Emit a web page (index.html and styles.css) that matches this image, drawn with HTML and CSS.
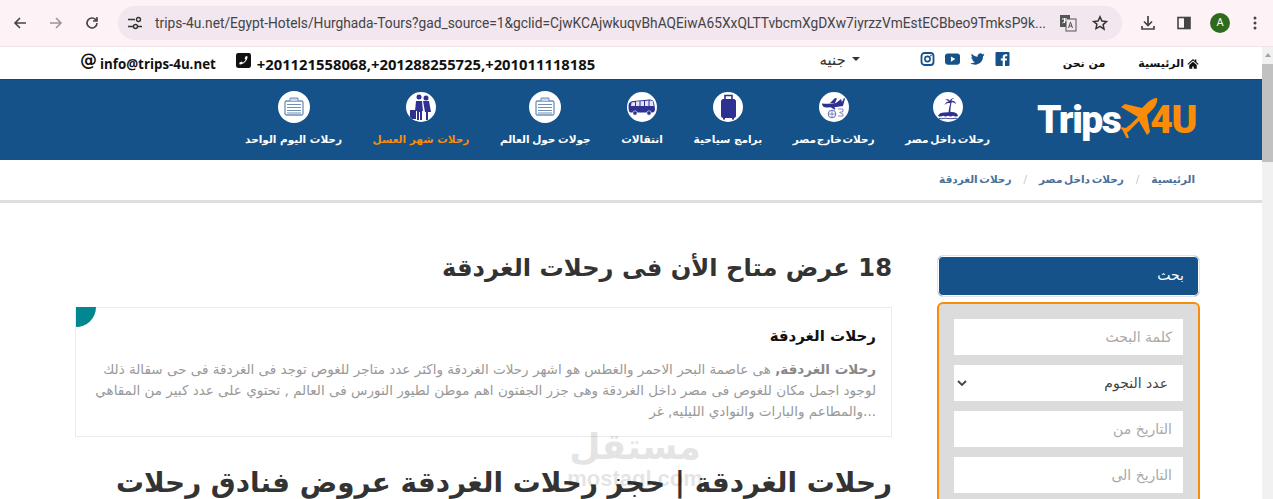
FILE: index.html
```html
<!DOCTYPE html>
<html lang="ar">
<head>
<meta charset="utf-8">
<title>Trips 4U</title>
<link rel="stylesheet" href="styles.css">
</head>
<body>
<div class="chrome">
  <svg class="tb back" viewBox="0 0 16 16"><path d="M14 8H3M8 3 3 8l5 5" fill="none" stroke="#444" stroke-width="1.6"/></svg>
  <svg class="tb fwd" viewBox="0 0 16 16"><path d="M2 8h11M8 3l5 5-5 5" fill="none" stroke="#9a979b" stroke-width="1.6"/></svg>
  <svg class="tb reload" viewBox="0 0 16 16"><path d="M13 8a5 5 0 1 1-1.5-3.6L13 6M13 2v4H9" fill="none" stroke="#444" stroke-width="1.6"/></svg>
  <div class="omni">
    <svg class="tune" viewBox="0 0 16 16"><path d="M1 4.500h7M11 11.500h4M1 11.500h5" stroke="#333" stroke-width="1.500"/><circle cx="11.500" cy="4.500" r="2" fill="none" stroke="#333" stroke-width="1.400"/><circle cx="8.500" cy="11.500" r="2" fill="none" stroke="#333" stroke-width="1.400"/></svg>
    <span class="url">trips-4u.net/Egypt-Hotels/Hurghada-Tours?gad_source=1&amp;gclid=CjwKCAjwkuqvBhAQEiwA65XxQLTTvbcmXgDXw7iyrzzVmEstECBbeo9TmksP9k...</span>
    <svg class="translate" viewBox="0 0 18 18"><rect x="1" y="1" width="10" height="12" fill="#555"/><rect x="7" y="5" width="10" height="12" fill="#f2e6ef" stroke="#555"/><path d="M3 5h5M5.500 4v5M3.500 9l4-3" stroke="#fff" stroke-width="1" fill="none"/><path d="M9.500 14l2-6 2 6M10 12h3" stroke="#555" stroke-width="1" fill="none"/></svg>
    <svg class="star" viewBox="0 0 16 16"><path d="m8 1.800 1.900 4.200 4.600.5-3.400 3.100.9 4.500L8 11.300 4 13.600l.9-4.500L1.500 6.500l4.600-.5z" fill="none" stroke="#333" stroke-width="1.500"/></svg>
  </div>
  <svg class="tb dl" viewBox="0 0 16 16"><path d="M8 1v9M4 6.500 8 10.500l4-4M2 11v3h12v-3" fill="none" stroke="#444" stroke-width="1.700"/></svg>
  <svg class="tb side" viewBox="0 0 16 16"><rect x="2" y="2.500" width="12" height="11" fill="none" stroke="#444" stroke-width="1.600"/><rect x="8" y="2.500" width="6" height="11" fill="#444"/></svg>
  <span class="avatar">A</span>
  <svg class="tb menu" viewBox="0 0 16 16"><circle cx="8" cy="3" r="1.500" fill="#444"/><circle cx="8" cy="8" r="1.500" fill="#444"/><circle cx="8" cy="13" r="1.500" fill="#444"/></svg>
</div>
<div class="viewport">
  <div class="page">
    <div class="topbar">
      <a class="top-link home"><svg class="home-ico" viewBox="0 0 16 14"><path d="M8 1 0.500 7.500l1 1L8 3l6.500 5.500 1-1L12.500 5V1.500h-2v1.800zM3 9v5h4v-3h2v3h4V9L8 4.500z" fill="#111"/></svg>الرئيسية</a>
      <a class="top-link about">من نحن</a>
      <div class="social">
        <svg viewBox="0 0 14 14"><path d="M1 0h12a1 1 0 0 1 1 1v12a1 1 0 0 1-1 1H9.500V8.600h1.800l.3-2.100H9.500V5.200c0-.6.2-1 1-1h1.200V2.300c-.6-.1-1.100-.1-1.700-.1-1.700 0-2.800 1-2.800 2.800v1.500H5.300v2.100h1.900V14H1a1 1 0 0 1-1-1V1a1 1 0 0 1 1-1z" fill="#155289"/></svg>
        <svg viewBox="0 0 16 14"><path d="M15.500 2.300c-.5.300-1.100.4-1.700.5.600-.4 1.100-1 1.300-1.700-.6.400-1.200.6-1.900.8A3 3 0 0 0 8.100 4.600C5.600 4.500 3.400 3.300 1.900 1.500 1.100 2.900 1.500 4.600 2.800 5.500c-.5 0-1-.2-1.400-.4 0 1.500 1 2.700 2.500 3-.5.100-.9.100-1.400 0 .4 1.200 1.500 2 2.900 2.100C3.600 11.200 1.900 11.700.3 11.500 4.400 14.100 9.300 13.200 12 10c1.300-1.600 1.900-3.500 1.900-5.900.6-.4 1.200-1 1.600-1.800z" fill="#155289"/></svg>
        <svg viewBox="0 0 16 14"><rect x="0" y="1" width="16" height="12" rx="3" fill="#155289"/><path d="M6.300 4.200v5.600L11 7z" fill="#fff"/></svg>
        <svg viewBox="0 0 14 14"><rect x="1" y="1" width="12" height="12" rx="3" fill="none" stroke="#155289" stroke-width="1.800"/><circle cx="7" cy="7" r="2.600" fill="none" stroke="#155289" stroke-width="1.600"/><circle cx="10.400" cy="3.600" r=".8" fill="#155289"/></svg>
      </div>
      <span class="currency">جنيه<i class="caret"></i></span>
      <div class="contact" dir="ltr">
        <span class="at">@</span><span class="mail">info@trips-4u.net</span>
        <svg class="phone" viewBox="0 0 14 14"><rect width="14" height="14" rx="2" fill="#111"/><path d="M10.800 3.300 9.200 2.800 8 5.200l1 .8c-.4 1.200-1.400 2.300-2.600 3l-.9-1L3 9l.4 1.700c3.500.3 7.400-3.500 7.400-7.400z" fill="#fff"/></svg>
        <span class="phones">+201121558068,+201288255725,+201011118185</span>
      </div>
    </div>

    <nav class="nav">
      <div class="logo" dir="ltr"><span class="logo-w">Trips</span><svg class="plane" viewBox="0 0 38 40"><path d="M37 0c1 4-2 9-6 13l-4 4 3 17-3 3-8-14-8 8c-1 2-3 3-4 3l2 6-2 1-4-8-3-4 6 1c1-1 2-2 4-3l8-8L1 9l4-3 17 4 5-5c3-3 7-5 10-5z" fill="#fa8c0a"/></svg><span class="logo-o">4U</span></div>
      <a class="nav-item"><span class="disc"><svg viewBox="0 0 30 30"><path d="M15.500 21c.3-4 1-7 1.800-9.500-2-1-4.300-.3-5.800 1.800.5-2.500 2.300-3.800 4.300-3.800-1-1.200-2.300-1.700-3.800-1.500 1.800-1.300 4-.8 5 .8.500-1.800 2.300-2.800 4.300-2.300-1.700.3-2.600 1.100-2.800 2.300 2-.3 4 .8 4.800 3.500-1.600-1.500-3.300-2.300-4.800-1.800-.8 3.500-1.200 7-1 10.500z" fill="#2e3192"/><path d="M5 24c1-2.500 3-3.500 6-3.500l8-.5c3 0 5.500 1 6 4-2 .8-3.500.6-5-.2-1.500 1-3.500 1-5 0-1.500 1-3.500 1-4.500 0-2 1-3.500 1-5.500.2z" fill="#2e3192"/><path d="M6 26.500c3 .8 5-.8 9 0s6-.8 9 0" fill="none" stroke="#2e3192" stroke-width=".9"/></svg></span>رحلات داخل مصر</a>
      <a class="nav-item tight"><span class="disc"><svg viewBox="0 0 30 30"><path d="M3 11.500c5 .5 10 .2 14-.5l5-4 1 3-1 2 3-6 1 .5-2 7.500-7 1-5 .2-4 .2c-3 .200-5-1-5-3.900z" fill="#2e3192"/><path d="M11 11l5-5 2 .5-2 4.500zM11 14.500l4 3 1.500-.3-1.500-3z" fill="#2e3192"/><circle cx="13" cy="22" r="3.800" fill="none" stroke="#5d6fb0" stroke-width="1"/><path d="M9.500 22h7M13 18.500v7" stroke="#5d6fb0" stroke-width=".8"/><path d="M19 17h5v2.500l-3.500 1 3.500 1.500v2h-5" fill="none" stroke="#7d8cc0"/></svg></span>رحلات خارج مصر</a>
      <a class="nav-item loose"><span class="disc"><svg viewBox="0 0 30 30"><rect x="8" y="7" width="15" height="19" rx="2.500" fill="#2e3192"/><path d="M12 7V3.500h7V7" fill="none" stroke="#2e3192" stroke-width="1.600"/><rect x="10" y="26" width="2" height="1.500" fill="#2e3192"/><rect x="19" y="26" width="2" height="1.500" fill="#2e3192"/></svg></span>برامج سياحية</a>
      <a class="nav-item"><span class="disc"><svg viewBox="0 0 30 30"><path d="M1.500 14c0-3 1.500-4.500 5-5l16-1.500c2.500 0 4 1 4.500 3l1 6.500c0 2-1 3.500-2.500 3.500H3.500C2.200 20.500 1.500 18 1.500 14z" fill="#2e3192"/><path d="M9 9.500l3.500-.3v4.800H9zM13.500 9.200l3.500-.3v5.100h-3.500zM18 8.900l3.500-.3v5.400H18zM22.500 8.600l3.500.3.600 5.100h-4.100zM4.500 10.500l3.500-.5v4H4z" fill="#e2e4f4"/><circle cx="8" cy="21" r="2.200" fill="#2e3192" stroke="#fff" stroke-width=".6"/><circle cx="22" cy="21" r="2.200" fill="#2e3192" stroke="#fff" stroke-width=".6"/></svg></span>انتقالات</a>
      <a class="nav-item tour"><span class="disc big"><svg viewBox="0 0 32 32"><rect x="7" y="10" width="18" height="14" rx="1.500" fill="#fff" stroke="#6d8fb8" stroke-width="1.300"/><path d="M12 10V7h8v3" fill="#cfd8e6" stroke="#6d8fb8"/><path d="M9 13.500h14M9 16.500h14M9 19.500h14M9 22h14" stroke="#6d8fb8" stroke-width="1.200"/></svg></span>جولات حول العالم</a>
      <a class="nav-item active loose"><span class="disc"><svg viewBox="0 0 30 30"><circle cx="13" cy="5" r="2.500" fill="#2e3192"/><circle cx="20" cy="6" r="2.500" fill="#2e3192"/><path d="M10 9h6l1 10h-1v9h-2v-8h-1v8h-2V19H9z" fill="#2e3192"/><path d="M17 9h6l2 11h-3v8h-2v-8h-1z" fill="#2e3192"/><rect x="4" y="18" width="6" height="9" fill="#2e3192"/></svg></span>رحلات شهر العسل</a>
      <a class="nav-item loose"><span class="disc big"><svg viewBox="0 0 32 32"><rect x="7" y="10" width="18" height="14" rx="1.500" fill="#fff" stroke="#6d8fb8" stroke-width="1.300"/><path d="M12 10V7h8v3" fill="#cfd8e6" stroke="#6d8fb8"/><path d="M9 13.500h14M9 16.500h14M9 19.500h14M9 22h14" stroke="#6d8fb8" stroke-width="1.200"/></svg></span>رحلات اليوم الواحد</a>
    </nav>

    <div class="crumbs">
      <a>الرئيسية</a><span class="sep">/</span><a>رحلات داخل مصر</a><span class="sep">/</span><a>رحلات الغردقة</a>
    </div>

    <main class="main">
      <aside class="side-col">
        <div class="search-head">بحث</div>
        <div class="search-box">
          <div class="field ph">كلمة البحث</div>
          <div class="field sel">عدد النجوم<svg viewBox="0 0 10 6"><path d="M1 1l4 4 4-4" fill="none" stroke="#444" stroke-width="1.800"/></svg></div>
          <div class="field ph">التاريخ من</div>
          <div class="field ph">التاريخ الى</div>
        </div>
      </aside>
      <section class="content">
        <h1 class="title">18 عرض متاح الأن فى رحلات الغردقة</h1>
        <article class="card">
          <span class="corner"></span>
          <h2 class="card-title">رحلات الغردقة</h2>
          <p class="card-text"><b>رحلات الغردقة,</b> هى عاصمة البحر الاحمر والغطس هو اشهر رحلات الغردقة واكثر عدد متاجر للغوص توجد فى الغردقة فى حى سقالة ذلك لوجود اجمل مكان للغوص فى مصر داخل الغردقة وهى جزر الجفتون اهم موطن لطيور النورس فى العالم , تحتوي على عدد كبير من المقاهي ...والمطاعم والبارات والنوادي الليليه, غر</p>
        </article>
        <h2 class="title2">رحلات الغردقة | حجز رحلات الغردقة عروض فنادق رحلات</h2>
      </section>
    </main>
    <div class="mark"><span class="mark-ar">مستقل</span><span class="mark-en">mostaql.com</span></div>
  </div>
  <div class="scrollbar"><span class="arrow"></span><span class="thumb"></span></div>
</div>
</body>
</html>
```
FILE: styles.css
```css
* { box-sizing: border-box; }
html, body { margin: 0; height: 499px; overflow: hidden; background: #fff; }
body { font-family: "DejaVu Sans", sans-serif; }
a { color: inherit; text-decoration: none; }

.chrome { height: 47px; display: flex; align-items: center; background: #fdf3f6; border-bottom: 1px solid #f0e4ea; padding: 0 0 0 12px; }
.tb { width: 16px; height: 16px; flex: none; }
.fwd { margin-left: 20px; }
.reload { margin-left: 20px; }
.omni { margin-left: 18px; width: 1004px; height: 34px; border-radius: 17px; background: #f2e6ef; display: flex; align-items: center; padding: 0 14px 0 9px; }
.tune { width: 16px; height: 16px; flex: none; }
.url { margin-left: 12px; font: 13.75px "Roboto", "Liberation Sans", sans-serif; color: #444; white-space: nowrap; flex: 1; overflow: hidden; }
.translate { width: 18px; height: 18px; flex: none; margin-left: 9px; }
.star { width: 16px; height: 16px; flex: none; margin-left: 15px; }
.dl { margin-left: 18px; }
.side { margin-left: 20px; }
.avatar { margin-left: 18px; width: 20px; height: 20px; border-radius: 50%; background: #2f6b1f; color: #fff; font: 11px/20px "Roboto", sans-serif; text-align: center; flex: none; }
.menu { margin-left: 17px; }

.viewport { display: flex; height: 452px; }
.page { flex: 1; min-width: 0; position: relative; overflow: hidden; direction: rtl; }
.scrollbar { width: 11px; background: #f1f1f1; display: flex; flex-direction: column; align-items: stretch; flex: none; }
.arrow { height: 17px; display: block; position: relative; }
.arrow::after { content: ""; position: absolute; left: 3px; top: 6px; border: 3px solid transparent; border-bottom: 4px solid #a3a3a3; border-top: 0; }
.thumb { height: 98px; background: #c1c1c1; display: block; }

.topbar { height: 32px; display: flex; align-items: center; padding: 0 63px 0 0; font-size: 11px; font-weight: 700; color: #111; }
.top-link { white-space: nowrap; }
.home { display: inline-flex; align-items: center; gap: 3px; }
.home-ico { width: 12px; height: 11px; }
.about { margin-right: 33px; }
.social { display: flex; gap: 10px; margin-right: 53px; margin-top: -8px; }
.social svg { width: 15px; height: 14px; }
.currency { margin-right: 60px; font-weight: 400; font-size: 15px; color: #333; display: inline-flex; align-items: center; gap: 6px; margin-top: -6px; }
.caret { border: 4px solid transparent; border-top: 4px solid #333; border-bottom: 0; margin-top: -2px; order: -1; }
.contact { margin-right: auto; margin-left: 80px; display: flex; align-items: center; font-family: "Open Sans", "Liberation Sans", sans-serif; font-weight: 700; color: #111; white-space: nowrap; margin-top: 2px; }
.at { font: 700 17px "DejaVu Sans", sans-serif; margin-right: 3px; margin-top: -9px; }
.mail { font-size: 13.3px; }
.phone { width: 15px; height: 15px; margin: -7px 6px 0 20px; }
.phones { font-size: 14.8px; }

.nav { height: 81px; background: #155289; display: flex; padding: 0 64px 0 0; align-items: flex-start; border-top: 1px solid #0f4877; }
.logo { display: flex; align-items: center; height: 80px; margin-left: 47px; width: 161px; flex: none; }
.logo-w, .logo-o { font: 900 39px/1 "Roboto", "Liberation Sans", sans-serif; letter-spacing: -1.500px; }
.logo-w { color: #fff; }
.logo-o { color: #fa8c0a; margin-left: -8px; }
.plane { width: 38px; height: 40px; flex: none; margin-top: -4px; }
.nav-item { display: flex; flex-direction: column; align-items: center; font-size: 10.5px; word-spacing: -2px; font-weight: 700; color: #fff; white-space: nowrap; margin-left: 30.6px; padding-top: 12px; }
.nav-item.active { color: #fa8c0a; }
.nav-item.tight { word-spacing: -3px; }
.nav-item.tour { word-spacing: -1px; }
.nav-item.loose { word-spacing: 0; }
.disc { width: 30px; height: 30px; border-radius: 50%; background: #fff; display: block; margin-bottom: 11px; overflow: hidden; }
.disc svg { width: 100%; height: 100%; display: block; }
.disc.big { width: 32px; height: 32px; margin: -1px 0 10px; }

.crumbs { height: 43px; display: flex; align-items: center; padding: 0 67px 2px 0; font-size: 10.5px; word-spacing: -2px; font-weight: 700; color: #4b7199; border-bottom: 3px solid #dedede; background: #fff; }
.sep { margin: 0 12px; color: #c8c8c8; font-weight: 400; }

.main { display: flex; padding: 47px 62px 0 0; gap: 45px; align-items: flex-start; }
.side-col { width: 263px; flex: none; margin-top: 5px; }
.search-head { height: 42px; border: 1px solid #e4e4e4; border-radius: 6px; background: #155289; box-shadow: inset 0 0 0 1px #fff; color: #fff; font-size: 14px; line-height: 38px; padding-right: 15px; }
.search-box { margin-top: 5px; border: 2px solid #fa8c0a; border-radius: 6px; background: #dcdcdc; padding: 15px; display: flex; flex-direction: column; gap: 10px; }
.field { height: 36px; background: #fff; padding: 0 11px; font-size: 14px; line-height: 36px; color: #a9a9a9; }
.sel { color: #444; padding-right: 15px; display: flex; justify-content: space-between; align-items: center; padding-left: 3px; }
.sel svg { width: 10px; height: 6px; }

.content { width: 817px; flex: none; color: #333; }
.title { margin: 0; font-size: 24.200px; line-height: 36px; font-weight: 700; color: #333; }
.card { position: relative; margin-top: 21px; height: 130px; border: 1px solid #ebebeb; padding: 17px 15px 0; }
.corner { position: absolute; top: -1px; left: 0; width: 20px; height: 20px; background: #00878f; border-bottom-right-radius: 20px; }
.card-title { margin: 0; font-size: 15px; line-height: 22px; font-weight: 700; color: #111; }
.card-text { margin: 12px 0 0; font-size: 13.5px; line-height: 21px; color: #999; }
.card-text b { color: #888; }
.title2 { margin: 25px 0 0; font-size: 27.850px; line-height: 42px; font-weight: 700; color: #333; white-space: nowrap; }

.mark { position: absolute; left: 570px; top: 378px; width: 130px; color: #000; opacity: .1; display: flex; flex-direction: column; align-items: center; }
.mark-ar { font-size: 36px; font-weight: 700; line-height: 44px; }
.mark-en { font: 700 22px/20px "Liberation Sans", sans-serif; }
```
